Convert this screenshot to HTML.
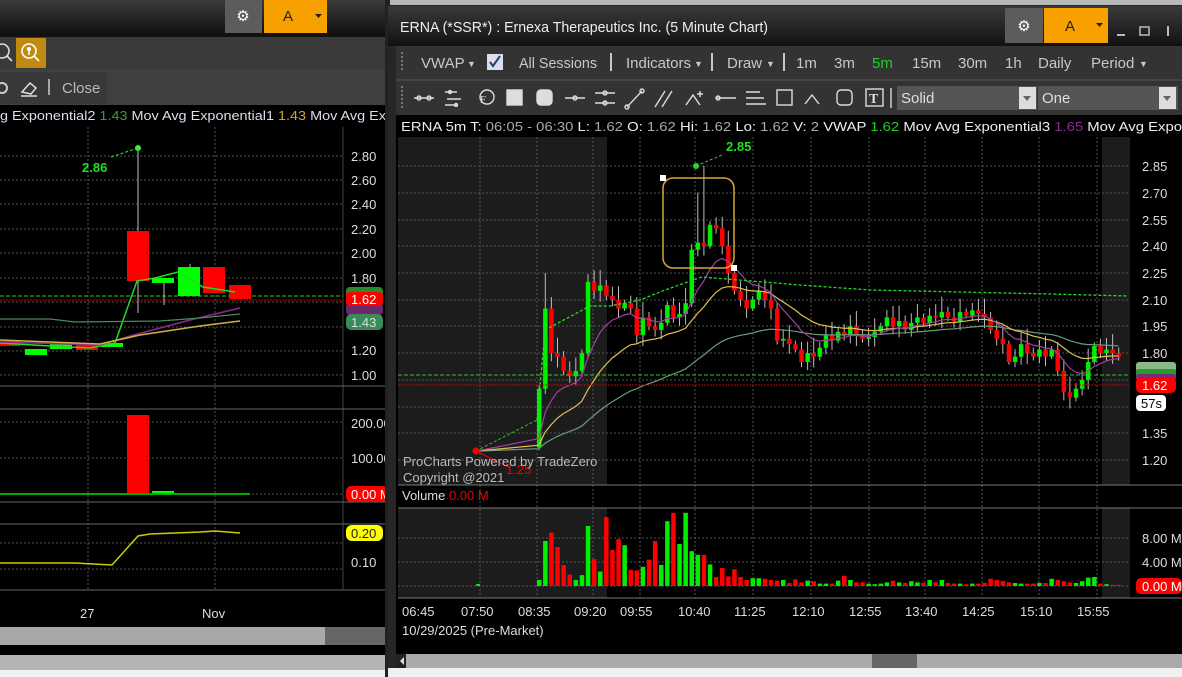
<!DOCTYPE html>
<html><head><meta charset="utf-8"><style>
html,body{margin:0;padding:0;background:#f0f0f0;width:1182px;height:677px;overflow:hidden}
svg{display:block;font-family:"Liberation Sans",sans-serif}
</style></head><body>
<svg id="s" width="1182" height="677" viewBox="0 0 1182 677" xmlns="http://www.w3.org/2000/svg">
<rect width="1182" height="677" fill="#f0f0f0"/>
<!-- LEFT WINDOW -->
<defs><linearGradient id="tb" x1="0" y1="0" x2="0" y2="1"><stop offset="0" stop-color="#3a3a3a"/><stop offset="1" stop-color="#111"/></linearGradient></defs>
<rect x="0" y="0" width="388" height="34" fill="url(#tb)"/>
<rect x="225" y="0" width="37" height="33" fill="#5c5c5c"/>
<text x="243" y="21" fill="#fff" font-size="15" text-anchor="middle">⚙</text>
<rect x="264" y="0" width="63" height="33" fill="#f7a000"/>
<text x="288" y="21" fill="#222" font-size="15" text-anchor="middle">A</text>
<path d="M315 14h7l-3.5 4z" fill="#222"/>
<rect x="0" y="34" width="388" height="3" fill="#111"/>
<rect x="0" y="37" width="388" height="32" fill="#3a3a3a"/>
<circle cx="2" cy="51" r="7" fill="none" stroke="#ddd" stroke-width="1.6"/><path d="M7 56l5 5" stroke="#ddd" stroke-width="1.6"/>
<rect x="16" y="38" width="30" height="30" fill="#c08a10"/>
<circle cx="29" cy="51" r="7" fill="none" stroke="#fff" stroke-width="1.6"/><path d="M34 56l5 5" stroke="#fff" stroke-width="1.6"/><circle cx="29" cy="49" r="2" fill="#fff"/><path d="M29 50v5" stroke="#fff" stroke-width="1.5"/>
<rect x="0" y="69" width="388" height="36" fill="#404040"/>
<rect x="0" y="72" width="107" height="32" fill="#383838"/>
<circle cx="2" cy="88" r="5" fill="none" stroke="#ccc" stroke-width="2"/>
<path d="M22 92l8-9 6 5-5 6z M21 96h16" stroke="#ddd" stroke-width="1.5" fill="none"/>
<path d="M49 79v16" stroke="#ccc" stroke-width="1.5"/>
<text x="62" y="93" fill="#bbb" font-size="15">Close</text>
<rect x="0" y="105" width="388" height="22" fill="#000"/>
<text x="0" y="120" font-size="13" fill="#dde" textLength="386" lengthAdjust="spacingAndGlyphs">g Exponential2 <tspan fill="#3c9c3c">1.43</tspan>  Mov Avg Exponential1 <tspan fill="#c8a830">1.43</tspan>  Mov Avg Ex</text>
<rect x="0" y="127" width="388" height="500" fill="#000"/>
<g stroke="#555" stroke-dasharray="2 2" stroke-width="1">
<path d="M0 156H343M0 180H343M0 204H343M0 229H343M0 253H343M0 278H343M0 302H343M0 327H343M0 351H343M0 375H343"/>
<path d="M0 422H343M0 458H343M0 494H343M0 543H343M0 569H343"/>
<path d="M88 127V590M215 127V590"/>
</g>
<path d="M343 127V590" stroke="#444"/>
<path d="M0 386H388M0 409H388M0 502H388M0 524H388M0 590H388" stroke="#666"/>
<g fill="#ddd" font-size="13">
<text x="351" y="161">2.80</text><text x="351" y="185">2.60</text><text x="351" y="209">2.40</text><text x="351" y="234">2.20</text><text x="351" y="258">2.00</text><text x="351" y="283">1.80</text><text x="351" y="355">1.20</text><text x="351" y="380">1.00</text>
<text x="351" y="428">200.00</text><text x="351" y="463">100.00</text><text x="351" y="567">0.10</text>
<text x="80" y="618">27</text><text x="202" y="618">Nov</text>
</g>
<path d="M0 296H343" stroke="#2c2" stroke-dasharray="4 2"/>
<path d="M0 300H343" stroke="#c00" stroke-dasharray="2 1"/>
<rect x="346" y="287" width="37" height="12" rx="4" fill="#2a8a2a"/>
<rect x="346" y="303" width="37" height="12" rx="4" fill="#6a2a6a"/>
<rect x="346" y="292" width="37" height="14" rx="4" fill="#f00"/>
<text x="351" y="304" fill="#fff" font-size="13">1.62</text>
<rect x="346" y="314" width="37" height="16" rx="5" fill="#3a8a5a"/>
<text x="351" y="327" fill="#ddd" font-size="13">1.43</text>
<rect x="346" y="486" width="42" height="16" rx="5" fill="#f00"/>
<text x="351" y="499" fill="#fff" font-size="13">0.00 M</text>
<rect x="346" y="525" width="37" height="16" rx="6" fill="#ff0"/>
<text x="351" y="538" fill="#222" font-size="13">0.20</text>
<!-- left candles -->
<path d="M138 148V313M164 282V305M190 264V290" stroke="#bbb"/>
<rect x="127" y="231" width="22" height="50" fill="#f00"/>
<rect x="152" y="278" width="22" height="5" fill="#0f0"/>
<rect x="178" y="267" width="22" height="29" fill="#0f0"/>
<rect x="203" y="267" width="22" height="26" fill="#f00"/>
<rect x="229" y="285" width="22" height="14" fill="#f00"/>
<rect x="0" y="341" width="20" height="5" fill="#f00"/><rect x="25" y="349" width="22" height="6" fill="#0f0"/><rect x="50" y="343" width="22" height="6" fill="#0f0"/><rect x="76" y="344" width="22" height="6" fill="#f00"/><rect x="101" y="343" width="22" height="4" fill="#0f0"/>
<path d="M0 343L50 346L90 348L115 343L137 281L155 278L178 272L203 287L235 292" stroke="#2d2" stroke-width="1.5" fill="none"/>
<circle cx="138" cy="148" r="3" fill="#3e3"/><path d="M111 157L138 148" stroke="#3e3" stroke-dasharray="3 2"/>
<text x="82" y="172" fill="#2d2" font-size="13" font-weight="bold">2.86</text>
<path d="M0 342L100 345L130 336L190 320L240 308" stroke="#8a2a8a" stroke-width="1.5" fill="none"/>
<path d="M0 340L100 344L140 335L200 326L240 321" stroke="#d4b040" stroke-width="1.5" fill="none"/>
<path d="M0 319L50 319L75 322L160 321L200 318L240 314" stroke="#4a8a5a" stroke-width="1.2" fill="none"/>
<rect x="127" y="415" width="22" height="80" fill="#f00"/>
<rect x="152" y="491" width="22" height="4" fill="#0f0"/>
<path d="M0 494H250" stroke="#0a0" stroke-width="2"/>
<path d="M0 563L75 563L112 565L138 536L150 534L200 532L215 531L240 533" stroke="#cc0" stroke-width="1.5" fill="none"/>
<rect x="0" y="627" width="325" height="18" fill="#a8a8a8"/><rect x="325" y="627" width="63" height="18" fill="#666"/>
<rect x="0" y="645" width="388" height="10" fill="#000"/>
<rect x="0" y="655" width="388" height="15" fill="#b4b4b4"/>
<rect x="385" y="0" width="5" height="677" fill="#222"/>

<!-- RIGHT WINDOW -->
<rect x="390" y="0" width="792" height="6" fill="#b8b8b8"/>
<rect x="388" y="5" width="794" height="665" fill="#262626"/>
<rect x="388" y="6" width="794" height="40" fill="url(#tb)"/>
<text x="400" y="32" fill="#eee" font-size="15" textLength="368" lengthAdjust="spacingAndGlyphs">ERNA (*SSR*) : Ernexa Therapeutics Inc. (5 Minute Chart)</text>
<rect x="1005" y="8" width="38" height="35" fill="#5c5c5c"/>
<text x="1024" y="31" fill="#fff" font-size="15" text-anchor="middle">⚙</text>
<rect x="1044" y="8" width="64" height="35" fill="#f7a000"/>
<text x="1070" y="31" fill="#222" font-size="15" text-anchor="middle">A</text>
<path d="M1096 23h7l-3.5 4z" fill="#222"/>
<path d="M1117 35h8" stroke="#bbb" stroke-width="2"/><rect x="1140" y="27" width="9" height="8" fill="none" stroke="#bbb" stroke-width="1.5"/><path d="M1168 26v10" stroke="#bbb" stroke-width="2"/>
<rect x="396" y="46" width="786" height="34" fill="#333"/>
<rect x="396" y="80" width="786" height="35" fill="#333"/>
<path d="M396 80H1182" stroke="#555"/>
<path d="M402 52v20M402 86v22" stroke="#bbb" stroke-dasharray="2 2"/>
<g fill="#c8c8c8" font-size="15">
<text x="421" y="68">VWAP</text><text x="467" y="67" font-size="9">▼</text>
<rect x="487" y="54" width="16" height="16" fill="#dde" /><path d="M490 62l3 4 7-10" stroke="#246" stroke-width="2" fill="none"/>
<text x="519" y="68" textLength="78" lengthAdjust="spacingAndGlyphs">All Sessions</text>
<rect x="610" y="53" width="2" height="18"/>
<text x="626" y="68" textLength="65" lengthAdjust="spacingAndGlyphs">Indicators</text><text x="694" y="67" font-size="9">▼</text>
<rect x="711" y="53" width="2" height="18"/>
<text x="727" y="68">Draw</text><text x="766" y="67" font-size="9">▼</text>
<rect x="783" y="53" width="2" height="18"/>
<text x="796" y="68">1m</text><text x="834" y="68">3m</text><text x="872" y="68" fill="#2c2">5m</text><text x="912" y="68">15m</text><text x="958" y="68">30m</text><text x="1005" y="68">1h</text><text x="1038" y="68">Daily</text><text x="1091" y="68">Period</text><text x="1139" y="67" font-size="9">▼</text>
</g>
<g stroke="#ddd" stroke-width="1.4" fill="none">
<path d="M414 98h20"/><circle cx="419" cy="98" r="2"/><circle cx="429" cy="98" r="2"/>
<path d="M445 92h12M447 99h14M445 105h12"/><circle cx="450" cy="92" r="1.5"/><circle cx="456" cy="105" r="1.5"/>
<circle cx="487" cy="97" r="7"/><text x="480" y="103" fill="#ddd" stroke="none" font-size="11" font-family="Liberation Serif">F</text>
<rect x="507" y="90" width="15" height="15" fill="#ddd"/>
<rect x="537" y="90" width="15" height="15" rx="4" fill="#ddd"/>
<path d="M565 98h20"/><circle cx="575" cy="98" r="2"/>
<path d="M595 93h20M595 103h20"/><circle cx="605" cy="93" r="2"/><circle cx="605" cy="103" r="2"/>
<path d="M627 107l15-16"/><circle cx="627" cy="107" r="2"/><circle cx="642" cy="91" r="2"/>
<path d="M655 107l10-16M662 107l10-16"/>
<path d="M686 105l7-10 7 10M700 91v6M697 94h6"/>
<path d="M716 98h20"/><circle cx="718" cy="98" r="2"/>
<path d="M746 92h14M746 98h18M746 104h20"/>
<rect x="777" y="90" width="15" height="15"/>
<path d="M805 104l7-9 7 9"/>
<rect x="837" y="90" width="15" height="15" rx="4"/>
<rect x="866" y="89" width="17" height="17"/><text x="869" y="103" fill="#ddd" stroke="none" font-size="14" font-weight="bold" font-family="Liberation Serif">T</text>
<path d="M891 88v20"/>
</g>
<rect x="897" y="86" width="140" height="24" fill="#555"/><text x="901" y="103" fill="#ddd" font-size="15">Solid</text>
<rect x="1019" y="87" width="17" height="22" fill="#ddd"/><path d="M1023 96h8l-4 5z" fill="#666"/>
<rect x="1038" y="86" width="140" height="24" fill="#555"/><text x="1042" y="103" fill="#ddd" font-size="15">One</text>
<rect x="1159" y="87" width="17" height="22" fill="#ddd"/><path d="M1163 96h8l-4 5z" fill="#666"/>
<rect x="396" y="115" width="786" height="22" fill="#000"/>
<text x="401" y="131" font-size="13" fill="#eee" textLength="781" lengthAdjust="spacingAndGlyphs">ERNA 5m  T: <tspan fill="#aaa">06:05 - 06:30</tspan>  L: <tspan fill="#aaa">1.62</tspan>  O: <tspan fill="#aaa">1.62</tspan>  Hi: <tspan fill="#aaa">1.62</tspan>  Lo: <tspan fill="#aaa">1.62</tspan>  V: <tspan fill="#aaa">2</tspan>  VWAP  <tspan fill="#2c2">1.62</tspan>  Mov Avg Exponential3  <tspan fill="#8a2a8a">1.65</tspan>  Mov Avg Expo</text>
<rect x="396" y="137" width="786" height="517" fill="#000"/>
<rect x="398" y="137" width="209" height="348" fill="#1c1c1c"/>
<rect x="1102" y="137" width="28" height="348" fill="#1c1c1c"/>
<rect x="398" y="508" width="209" height="90" fill="#1c1c1c"/>
<rect x="1102" y="508" width="28" height="90" fill="#1c1c1c"/>
<g stroke="#555" stroke-dasharray="2 2">
<path id="hg" d="M398 166H1130M398 193H1130M398 220H1130M398 246H1130M398 273H1130M398 300H1130M398 326H1130M398 353H1130M398 380H1130M398 407H1130M398 433H1130M398 460H1130"/>
<path d="M480 137V598M537 137V598M593 137V598M640 137V598M695 137V598M753 137V598M811 137V598M869 137V598M925 137V598M982 137V598M1039 137V598M1097 137V598"/>
<path d="M398 538H1130M398 562H1130M398 586H1130"/>
</g>
<path d="M398 485H1182M398 508H1182M398 598H1182" stroke="#777"/>
<g fill="#ddd" font-size="13">
<text x="1142" y="171">2.85</text><text x="1142" y="198">2.70</text><text x="1142" y="225">2.55</text><text x="1142" y="251">2.40</text><text x="1142" y="278">2.25</text><text x="1142" y="305">2.10</text><text x="1142" y="331">1.95</text><text x="1142" y="358">1.80</text><text x="1142" y="438">1.35</text><text x="1142" y="465">1.20</text>
<text x="1142" y="543">8.00 M</text><text x="1142" y="567">4.00 M</text>
<text x="402" y="616">06:45</text><text x="461" y="616">07:50</text><text x="518" y="616">08:35</text><text x="574" y="616">09:20</text><text x="620" y="616">09:55</text><text x="678" y="616">10:40</text><text x="734" y="616">11:25</text><text x="792" y="616">12:10</text><text x="849" y="616">12:55</text><text x="905" y="616">13:40</text><text x="962" y="616">14:25</text><text x="1020" y="616">15:10</text><text x="1077" y="616">15:55</text>
<text x="402" y="635">10/29/2025 (Pre-Market)</text>
<text x="402" y="500">Volume <tspan fill="#e00">0.00 M</tspan></text>
</g>
<g id="cg"></g>
<path d="M398 375H1130" stroke="#2c2" stroke-dasharray="4 2"/>
<path d="M398 385H1130" stroke="#c00" stroke-dasharray="2 1"/>
<rect x="1136" y="362" width="40" height="10" rx="3" fill="#8ab88a"/>
<rect x="1136" y="369" width="40" height="9" rx="3" fill="#2a9a2a"/>
<rect x="1136" y="374" width="40" height="6" rx="2" fill="#7a2a7a"/>
<rect x="1136" y="377" width="40" height="16" rx="5" fill="#f00"/>
<text x="1142" y="390" fill="#fff" font-size="13">1.62</text>
<rect x="1136" y="395" width="30" height="16" rx="4" fill="#fff"/>
<text x="1141" y="408" fill="#000" font-size="13">57s</text>
<rect x="1136" y="578" width="46" height="16" rx="5" fill="#f00"/>
<text x="1142" y="591" fill="#fff" font-size="13">0.00 M</text>
<rect x="663" y="178" width="71" height="90" rx="10" fill="none" stroke="#d4a838" stroke-width="1.5"/>
<rect x="660" y="175" width="6" height="6" fill="#fff"/><rect x="731" y="265" width="6" height="6" fill="#fff"/>
<path d="M696 166L722 155" stroke="#2d2" stroke-dasharray="3 2"/><circle cx="696" cy="166" r="3" fill="#2d2"/>
<text x="726" y="151" fill="#2d2" font-size="13" font-weight="bold">2.85</text>
<path d="M476 451L537 420" stroke="#2c2" stroke-dasharray="3 2"/>
<path d="M476 451L510 468" stroke="#e00"/><circle cx="476" cy="451" r="3.5" fill="#e00"/>
<text x="506" y="474" fill="#e00" font-size="13">1.25</text>
<text x="403" y="466" fill="#bbb" font-size="13">ProCharts Powered by TradeZero</text>
<text x="403" y="482" fill="#bbb" font-size="13">Copyright @2021</text>
<rect x="396" y="654" width="786" height="14" fill="#aaa"/>
<rect x="396" y="654" width="10" height="14" fill="#222"/><path d="M404 657v8l-4-4z" fill="#ddd"/>
<rect x="872" y="654" width="45" height="14" fill="#666"/>
<rect x="388" y="668" width="794" height="9" fill="#f0f0f0"/>
</svg>
<script>
(function(){
var C=[1.60,2.05,1.80,1.78,1.70,1.67,1.70,1.80,2.20,2.15,2.18,2.12,2.10,2.05,2.08,2.05,1.90,2.00,1.95,1.93,1.97,2.07,2.00,2.02,2.08,2.38,2.42,2.40,2.52,2.50,2.40,2.25,2.15,2.10,2.05,2.10,2.15,2.10,2.05,1.87,1.88,1.85,1.82,1.75,1.80,1.78,1.83,1.90,1.87,1.92,1.90,1.95,1.90,1.88,1.89,1.92,1.95,2.00,1.95,1.98,1.93,1.97,2.00,1.97,2.01,2.00,2.03,2.00,1.98,2.03,2.01,2.04,2.02,2.00,1.93,1.88,1.85,1.75,1.78,1.85,1.80,1.78,1.82,1.78,1.82,1.70,1.58,1.55,1.60,1.65,1.75,1.84,1.80,1.82,1.80,1.78];
var V=[1,7.5,8.9,6.5,3.5,1.9,1,1.8,10,4.5,2.4,11.5,6,7.8,6.8,2.7,2.6,3.2,4.4,7.5,3.5,10.8,12.2,7,12.2,5.8,5.2,5.2,3.6,1.5,3,1.6,2.8,1.5,1,1.3,1.3,1.2,1,0.9,1,0.5,1.1,0.6,0.9,0.8,0.4,0.4,0.4,0.9,1.7,1,0.6,0.6,0.4,0.3,0.4,0.6,0.9,0.6,0.5,0.8,0.6,0.5,1,0.6,1,0.5,0.4,0.4,0.3,0.4,0.4,0.5,1.2,1,0.8,0.6,0.5,0.4,0.4,0.4,0.5,0.5,1.2,1,0.8,0.6,0.5,0.8,1.4,1.5,0.4,0.3,0.2,0.2];
function Y(p){return 166+(2.85-p)*178.2;}
var s='',o=1.27,e9=1.25,e20=1.25,e50=1.25,p9='476,'+Y(1.25),p20=p9,p50=p9;
for(var i=0;i<C.length;i++){
 var c=C[i],x=537+i*6.1,h=0.02+((i*37)%7)/90,hi=Math.max(o,c)+h,lo=Math.min(o,c)-h*0.7;
 if(i==27)hi=2.85; if(i==26)hi=2.70; if(i==1)hi=2.25;
 var g=c>=o,col=g?'#00ee00':'#ff0000';
 s+='<path d="M'+(x+2.2)+' '+Y(hi)+'V'+Y(lo)+'" stroke="#bbb"/>';
 var t=Y(Math.max(o,c)),b=Y(Math.min(o,c));
 s+='<rect x="'+x+'" y="'+t+'" width="4.5" height="'+Math.max(1.5,b-t)+'" fill="'+col+'"/>';
 var v=V[i]||0.3; s+='<rect x="'+x+'" y="'+(586-v*6)+'" width="4.5" height="'+(v*6)+'" fill="'+col+'"/>';
 e9+= (c-e9)*2/10; e20+=(c-e20)*2/21; e50+=(c-e50)*2/51;
 p9+=' '+(x+2)+','+Y(e9); p20+=' '+(x+2)+','+Y(e20); p50+=' '+(x+2)+','+Y(e50);
 o=c;
}
s+='<polyline points="'+p50+'" fill="none" stroke="#6a9a7a" stroke-width="1.2"/>';
s+='<polyline points="'+p20+'" fill="none" stroke="#e0c050" stroke-width="1.2"/>';
s+='<polyline points="'+p9+'" fill="none" stroke="#a040a0" stroke-width="1.2"/>';
s+='<polyline points="537,420 545,330 560,322 590,306 610,306 640,300 665,290 702,277 800,285 870,290 960,292 1050,294 1128,296" fill="none" stroke="#22dd22" stroke-width="1.3" stroke-dasharray="3 2"/>';
s+='<rect x="476" y="584" width="4" height="2" fill="#0e0"/>';
document.getElementById('cg').innerHTML=s;
})();
</script>
</body></html>
